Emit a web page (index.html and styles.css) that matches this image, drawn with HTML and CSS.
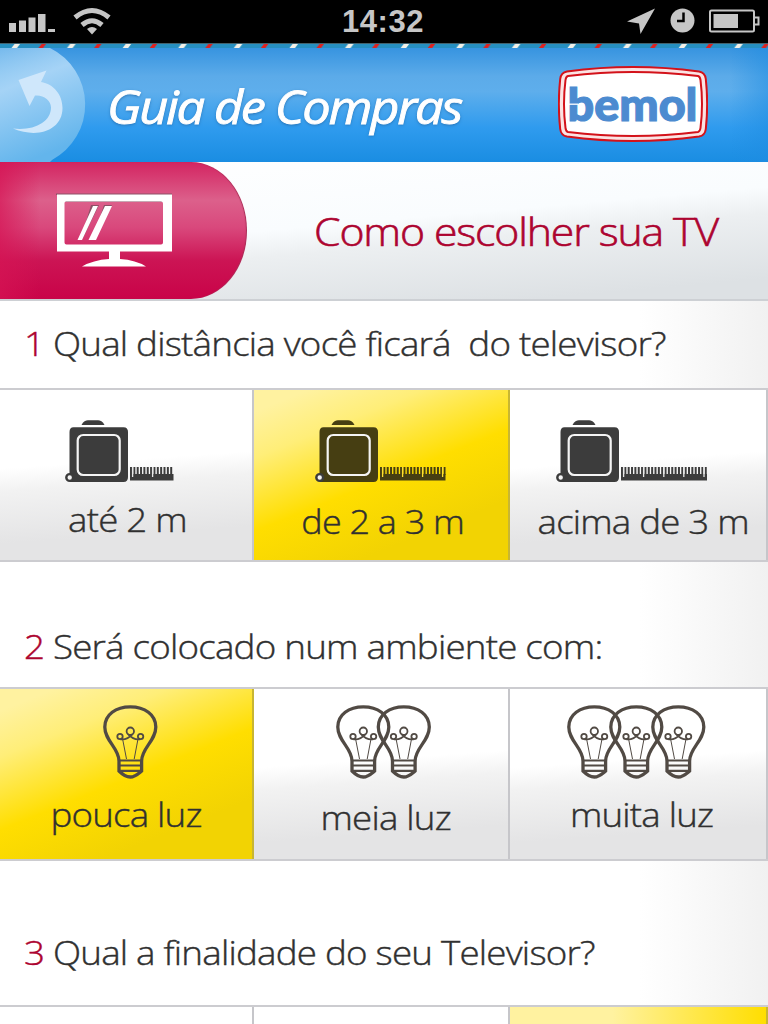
FILE: index.html
```html
<!DOCTYPE html>
<html lang="pt-BR">
<head>
  <meta charset="UTF-8">
  <meta name="viewport" content="width=device-width, initial-scale=1.0">
  <title>Guia de Compras</title>
  <link rel="stylesheet" href="styles.css">
</head>
<body>
  <!-- shared icons -->
  <svg class="defs" width="0" height="0">
    <defs>
      <symbol id="tape" viewBox="0 0 64 64" overflow="visible">
        <path d="M16.500 5 C18 1.500 21 0.300 23 0.300 H33 C35 0.300 38 1.500 39.500 5Z"/>
        <path d="M8.500 7.300 H58.500 Q63 7.300 63 12 V57 Q63 62 58.500 62 H5 L4.500 53 V12 Q4.500 7.300 8.500 7.300Z"/>
        <circle class="tape-ring" cx="4.700" cy="57.500" r="3.400"/>
        <rect class="tape-frame" x="12.700" y="15" width="42" height="40" rx="5.500"/>
      </symbol>
      <symbol id="bulb" viewBox="0 0 55 74" overflow="visible">
        <path class="bulb-line" d="M16 66 V56 C16 43 1.800 36 1.800 22 C1.800 9.500 13 1.800 27.300 1.800 S52.800 9.500 52.800 22 C52.800 36 38.600 43 38.600 56 V66 C35 69 32 72 27.300 72 S19 69 16 66Z"/>
        <path class="bulb-base" d="M16 55.500 H39 M17 60.500 H38 M16 65.800 H39"/>
        <path class="bulb-wire" d="M19.800 35 L23.500 54 M34.800 35 L31.200 54"/>
        <g class="bulb-loop">
          <circle cx="27.300" cy="26.200" r="3.700"/>
          <circle cx="17" cy="31.500" r="2.700"/>
          <circle cx="37.600" cy="31.500" r="2.700"/>
          <path d="M17.500 34.300 C22 35 26.500 32.500 29.500 29.200 M37.100 34.300 C32.600 35 28.100 32.500 25.100 29.200"/>
        </g>
      </symbol>
    </defs>
  </svg>

  <div class="status-bar">
    <svg class="status-left" width="120" height="44" viewBox="0 0 120 44">
      <path d="M9 23h7v9H9z M19 20.500h7V32h-7z M28.500 17.500h7V32h-7z M38 14h7.500v18H38z M48 29h7v3h-7z"/>
      <g class="wifi">
        <path d="M75 17.500 Q92 3.500 109 17.500"/>
        <path d="M82 25 Q92 16.500 102 25"/>
      </g>
      <path d="M87 29 Q92 25 97 29 L92 34.500Z"/>
    </svg>
    <span class="clock">14:32</span>
    <svg class="status-right" width="150" height="44" viewBox="618 0 150 44">
      <path d="M655 8.500 L640.500 34 L639 23.500 L627 21.500Z"/>
      <circle cx="682.500" cy="20.500" r="12"/>
      <path class="clock-hands" d="M683.500 12.500 V21 H677"/>
      <rect class="battery" x="710" y="10.500" width="44" height="21" rx="1.500"/>
      <path class="battery-tip" d="M755 17.500 h3.500 v7 h-3.500"/>
      <path d="M713.500 14 H738 V28 H713.500Z"/>
    </svg>
  </div>

  <svg class="stripe" width="768" height="4">
    <pattern id="dashes" width="55.600" height="4" patternUnits="userSpaceOnUse">
      <path fill="#f2f0e8" d="M11.500 4 L14.500 0 H20 L17 4Z"/>
      <path fill="#e0211f" d="M38.500 4 L41.500 0 H46 L43 4Z"/>
    </pattern>
    <rect width="768" height="4" fill="url(#dashes)"/>
  </svg>

  <header class="header">
    <svg class="back" width="87" height="114" viewBox="0 48 87 114">
      <defs>
        <linearGradient id="backFill" x1="0" y1="0" x2="0.300" y2="1">
          <stop offset="0" stop-color="#9fd2f5" stop-opacity=".6"/>
          <stop offset=".35" stop-color="#a5d3f6"/>
          <stop offset="1" stop-color="#63b5ec"/>
        </linearGradient>
      </defs>
      <path fill="url(#backFill)" d="M0 48 H50 A63 63 0 0 1 52 160 L50 162 H0Z"/>
      <path fill="#cfe7fb" d="M18.500 80 L46.500 70.500 L41 82 C54 84 62.500 95 62.500 108 C62.500 130 38 139 13 128.500 C34 131 51 122 51 107.500 C51 100 43 94.500 35 95.500 L29.500 106Z"/>
    </svg>
    <h1 class="title"><span class="wide">Guia de Compras</span></h1>
    <svg class="logo" width="150" height="76" viewBox="558 66 150 76">
      <path fill="#fbe3e3" stroke="#d3121a" stroke-width="2" d="M567 71.500 Q633 62.500 699 71.500 Q705 72.500 705.800 79 Q708.500 104 705.800 129 Q705 135.500 699 136.500 Q633 145.500 567 136.500 Q561 135.500 560.200 129 Q557.500 104 560.200 79 Q561 72.500 567 71.500Z"/>
      <path fill="#fff" stroke="#d3121a" stroke-width="2" d="M568 76 Q633 68 698 76 Q700 76.500 700.500 80 Q703.500 104 700.500 128 Q700 131.500 698 132 Q633 140 568 132 Q566 131.500 565.500 128 Q562.500 104 565.500 80 Q566 76.500 568 76Z"/>
      <text class="logo-text" x="567.500" y="120.500" textLength="130" lengthAdjust="spacingAndGlyphs">bemol</text>
      <path stroke="#fff" stroke-width="1.300" d="M568 104.200 H578"/>
    </svg>
  </header>

  <section class="banner">
    <div class="banner-tab">
      <svg width="118" height="76" viewBox="56 193 118 76">
        <path fill="#8d5166" d="M56 193.500 H172 V195 H56Z M63 200 h102 v44 h-2 v-42 h-100z M91 205 h8 l-16 33 h-2z M104 205 h8 l-17 33 h-2z"/>
        <path fill="#fff" fill-rule="evenodd" d="M57 194.500 H172 V251.500 H57Z M66 201.500 Q64.500 201.500 64.500 203 V242.500 Q64.500 244.500 66.500 244.500 H161 Q163 244.500 163 242.500 V203.500 Q163 201.500 161 201.500Z"/>
        <path fill="#fff" d="M93 206 H98 L82 240 H77.500Z M105 206 H112 L96 240 H88.500Z M109 251 H120 V259 Q136 260 146 266.500 H82 Q93 260 109 259Z"/>
      </svg>
    </div>
    <h2 class="banner-title"><span class="wide">Como escolher sua TV</span></h2>
  </section>

  <main>
    <h3 class="question q1"><span class="wide"><b>1</b> Qual distância você ficará&nbsp; do televisor?</span></h3>
    <div class="options">
      <div class="option">
        <svg class="icon" viewBox="0 0 254 105">
          <use href="#tape" x="65" y="30" width="64" height="64"/>
          <path d="M130 84 H173.500 V90.500 H130Z"/>
          <path class="ticks" d="M130 81 H173.500"/>
          <path class="marks" d="M132.600 77 v10 M152.600 77 v10"/>
        </svg>
        <span class="label l1">até 2 m</span>
      </div>
      <div class="option selected">
        <svg class="icon" viewBox="0 0 256 105">
          <use href="#tape" x="61" y="30" width="64" height="64"/>
          <path d="M126 84 H191.500 V90.500 H126Z"/>
          <path class="ticks" d="M126 81 H191.500"/>
          <path class="marks" d="M128.600 77 v10 M148.600 77 v10 M168.600 77 v10 M188.600 77 v10"/>
        </svg>
        <span class="label l2">de 2 a 3 m</span>
      </div>
      <div class="option">
        <svg class="icon" viewBox="0 0 258 105">
          <use href="#tape" x="46" y="30" width="64" height="64"/>
          <path d="M111 84 H197 V90.500 H111Z"/>
          <path class="ticks" d="M111 81 H197"/>
          <path class="marks" d="M113.600 77 v10 M133.600 77 v10 M153.800 77 v10 M173.800 77 v10 M194 77 v10"/>
        </svg>
        <span class="label l3">acima de 3 m</span>
      </div>
    </div>

    <h3 class="question q2"><span class="wide"><b>2</b> Será colocado num ambiente com:</span></h3>
    <div class="options">
      <div class="option selected">
        <svg class="icon" viewBox="0 0 254 105">
          <use href="#bulb" x="103" y="16" width="55" height="74"/>
        </svg>
        <span class="label l4">pouca luz</span>
      </div>
      <div class="option">
        <svg class="icon" viewBox="0 0 256 105">
          <use href="#bulb" x="82" y="16" width="55" height="74"/>
          <use href="#bulb" x="122.500" y="16" width="55" height="74"/>
        </svg>
        <span class="label l5">meia luz</span>
      </div>
      <div class="option">
        <svg class="icon" viewBox="0 0 258 105">
          <use href="#bulb" x="57" y="16" width="55" height="74"/>
          <use href="#bulb" x="99" y="16" width="55" height="74"/>
          <use href="#bulb" x="141" y="16" width="55" height="74"/>
        </svg>
        <span class="label l6">muita luz</span>
      </div>
    </div>

    <h3 class="question q3"><span class="wide"><b>3</b> Qual a finalidade do seu Televisor?</span></h3>
    <div class="options options-cut">
      <div class="option"></div>
      <div class="option"></div>
      <div class="option selected"></div>
    </div>
  </main>
</body>
</html>
```
FILE: styles.css
```css
* {
  box-sizing: border-box;
}

body {
  margin: 0;
  width: 768px;
  height: 1024px;
  overflow: hidden;
  font-family: "Open Sans", sans-serif;
  background: linear-gradient(to right, #fff 640px, #f1f1f1 768px);
  color: #303030;
}

h1, h2, h3 {
  margin: 0;
  font-weight: 300;
  white-space: nowrap;
}

svg {
  display: block;
  flex-shrink: 0;
}

.defs {
  display: none;
}

/* headings are set slightly expanded */
.wide {
  display: inline-block;
  letter-spacing: -0.7px;
  transform: scaleX(1.113);
  transform-origin: left;
  -webkit-text-stroke: 0.4px;
}

/* status bar */
.status-bar {
  display: flex;
  justify-content: space-between;
  height: 44px;
  background: #000;
  border-bottom: 1px solid #41616e;
  fill: #c6c6c6;
}

.wifi {
  fill: none;
  stroke: #c6c6c6;
  stroke-width: 5;
}

.clock {
  padding-left: 28px;
  font: bold 31px/43px "Liberation Sans", sans-serif;
  color: #c6c6c6;
  letter-spacing: 0.5px;
}

.clock-hands {
  fill: none;
  stroke: #000;
  stroke-width: 2.5;
}

.battery, .battery-tip {
  fill: none;
  stroke: #c6c6c6;
  stroke-width: 2;
}

.stripe {
  background: #268fc0;
}

/* header */
.header {
  display: flex;
  height: 114px;
  background:
    linear-gradient(to right, rgba(30, 140, 225, 0) 730px, rgba(30, 140, 225, 0.5)),
    linear-gradient(#3794e0, #5cabe9 25%, #5eaeec 38%, #2f9bee 70%, #1a8de2);
}

.title {
  width: 384px;
  margin-left: 20px;
  line-height: 116px;
  font-size: 46px;
  font-weight: 500;
  font-style: italic;
  color: #fff;
  text-shadow: 0 1px 3px #2268a8;
}

.title .wide {
  letter-spacing: -2px;
  transform: scaleX(1.098);
  -webkit-text-stroke: 0.9px;
}

.logo {
  margin: 18px 0 0 67px;
}

.logo-text {
  font-family: Lato, sans-serif;
  font-size: 46px;
  font-weight: 900;
  fill: #4c8bd0;
  stroke: #4c8bd0;
  stroke-width: 1.2;
}

/* banner */
.banner {
  display: flex;
  height: 139px;
  border-bottom: 2px solid #cdd0d4;
  background: linear-gradient(175deg, #fff, #f9fcfe 45%, #eceff1 58%, #dde1e4 90%);
}

.banner-tab {
  width: 247px;
  height: 137px;
  padding: 31px 0 0 56px;
  border-radius: 0 56px 56px 0 / 0 68px 68px 0;
  background:
    linear-gradient(to right, rgba(214, 20, 84, 0.7), rgba(214, 20, 84, 0) 40px),
    linear-gradient(#d32461, #dc608b 28%, #d9487c 48%, #cc1454 72%, #c90348);
  box-shadow: inset -1px 0 1px #a83058;
}

.banner-title {
  margin-left: 67px;
  line-height: 138px;
  font-size: 38px;
  color: #ad0430;
}

.banner-title .wide {
  letter-spacing: -1px;
  transform: scaleX(1.125);
  -webkit-text-stroke: 0.6px;
}

/* questions */
.question {
  padding-left: 24px;
  font-size: 33px;
}

.question b {
  font-weight: 300;
  color: #ad0430;
}

.q1 {
  height: 87px;
  line-height: 85px;
}

.q2 {
  height: 125px;
  line-height: 170px;
}

.q3 {
  height: 144px;
  line-height: 184px;
}

/* options */
.options {
  display: grid;
  grid-template-columns: 254px 256px 258px;
  height: 174px;
  border-top: 2px solid #ccccd0;
  border-bottom: 2px solid #ccccd0;
}

.option {
  display: flex;
  flex-direction: column;
  align-items: center;
  border-right: 2px solid #c6c6ca;
  background: linear-gradient(176deg, #e4e4e5 18%, #f2f2f2 46%, #fff 58%);
  background: linear-gradient(176deg, #fff 42%, #f2f2f2 54%, #e4e4e5 82%);
}

.selected {
  border-right-color: #c8b632;
  background: linear-gradient(158deg, #fff2a0 8%, #ffee78 25%, #ffde00 52%, #f2d303 78%);
}

/* last row continues below the screen */
.options-cut {
  height: 19px;
  border-bottom: 0;
}

.options-cut .option {
  background: #fff;
}

.options-cut .selected {
  background: linear-gradient(to right, #fff2a0 40%, #ffde00);
}

.icon {
  align-self: flex-start;
  height: 105px;
  fill: #3c3c3c;
}

.selected .icon {
  fill: #463e12;
}

.tape-ring {
  fill: #f4f4f4;
  stroke: #3c3c3c;
  stroke-width: 2.4;
}

.selected .tape-ring {
  fill: #ffea60;
  stroke: #463e12;
}

.tape-frame {
  fill: none;
  stroke: #f4f4f4;
  stroke-width: 2.2;
}

.selected .tape-frame {
  stroke: #ffea60;
}

.ticks {
  fill: none;
  stroke: #3c3c3c;
  stroke-width: 8;
  stroke-dasharray: 2 1.350;
}

.selected .ticks {
  stroke: #463e12;
}

.marks {
  stroke: #e8e8e8;
  stroke-width: 1.3;
}

.selected .marks {
  stroke: #ffe030;
}

.bulb-line, .bulb-base, .bulb-wire, .bulb-loop {
  fill: none;
  stroke: #514a44;
}

.bulb-line {
  stroke-width: 3.3;
}

.bulb-base {
  stroke-width: 2.2;
}

.bulb-wire {
  stroke-width: 1;
}

.bulb-loop {
  stroke-width: 1.8;
}

.label {
  font-size: 33px;
  font-weight: 300;
  line-height: 50px;
  letter-spacing: -0.7px;
  white-space: nowrap;
  transform: scaleX(1.11);
  -webkit-text-stroke: 0.4px;
}

.l1 {
  margin-left: 2px;
}

.l2 {
  margin: 2px 0 0 3px;
  transform: scaleX(1.09);
}

.l3 {
  margin: 2px 0 0 11px;
}

.l4 {
  margin-top: -4px;
}

.l5 {
  margin: -1px 0 0 9px;
}

.l6 {
  margin: -4px 0 0 8px;
}
```
